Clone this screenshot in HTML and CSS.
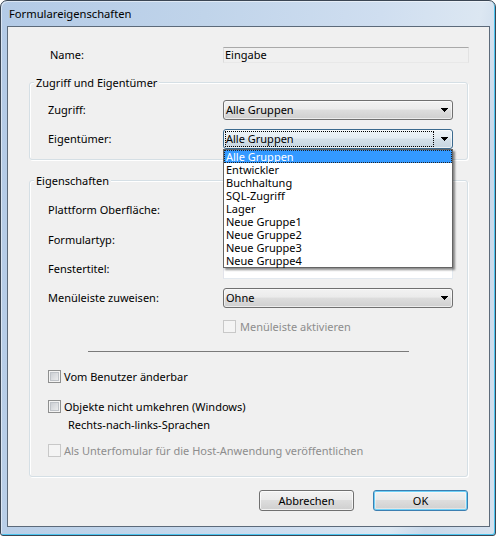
FILE: index.html
```html
<!DOCTYPE html>
<html lang="de">
<head>
<meta charset="utf-8">
<title>Formulareigenschaften</title>
<link rel="stylesheet" href="styles.css">
</head>
<body>
<div class="window">
  <div class="titlebar"><span class="title">Formulareigenschaften</span></div>
  <div class="client">
    <div class="row name-row">
      <span class="label">Name:</span>
      <div class="field readonly">Eingabe</div>
    </div>

    <div class="group group-access">
      <span class="legend">Zugriff und Eigentümer</span>
      <div class="row">
        <span class="label">Zugriff:</span>
        <div class="combo"><span class="value">Alle Gruppen</span><svg class="arrow" viewBox="0 0 7 4"><path d="M0 0h7v1h-1v1h-1v1h-1v1h-1v-1h-1v-1h-1v-1h-1z"/></svg></div>
      </div>
      <div class="row row-owner">
        <span class="label">Eigentümer:</span>
        <div class="combo combo-open">
          <span class="value focus-rect">Alle Gruppen</span><svg class="arrow" viewBox="0 0 7 4"><path d="M0 0h7v1h-1v1h-1v1h-1v1h-1v-1h-1v-1h-1v-1h-1z"/></svg>
          <ul class="dropdown">
            <li class="selected">Alle Gruppen</li>
            <li>Entwickler</li>
            <li>Buchhaltung</li>
            <li>SQL-Zugriff</li>
            <li>Lager</li>
            <li>Neue Gruppe1</li>
            <li>Neue Gruppe2</li>
            <li>Neue Gruppe3</li>
            <li>Neue Gruppe4</li>
          </ul>
        </div>
      </div>
    </div>

    <div class="group group-props">
      <span class="legend">Eigenschaften</span>
      <div class="row">
        <span class="label">Plattform Oberfläche:</span>
        <div class="combo"><span class="value"></span><svg class="arrow" viewBox="0 0 7 4"><path d="M0 0h7v1h-1v1h-1v1h-1v1h-1v-1h-1v-1h-1v-1h-1z"/></svg></div>
      </div>
      <div class="row row-g10">
        <span class="label">Formulartyp:</span>
        <div class="combo"><span class="value"></span><svg class="arrow" viewBox="0 0 7 4"><path d="M0 0h7v1h-1v1h-1v1h-1v1h-1v-1h-1v-1h-1v-1h-1z"/></svg></div>
      </div>
      <div class="row row-g9">
        <span class="label">Fenstertitel:</span>
        <div class="field"></div>
      </div>
      <div class="row row-g9">
        <span class="label">Menüleiste zuweisen:</span>
        <div class="combo"><span class="value">Ohne</span><svg class="arrow" viewBox="0 0 7 4"><path d="M0 0h7v1h-1v1h-1v1h-1v1h-1v-1h-1v-1h-1v-1h-1z"/></svg></div>
      </div>
      <div class="check disabled check-menu"><span class="box"></span><span>Menüleiste aktivieren</span></div>
      <div class="separator"></div>
      <div class="check check-user"><span class="box"></span><span>Vom Benutzer änderbar</span></div>
      <div class="check check-mirror"><span class="box"></span><span>Objekte nicht umkehren (Windows)</span></div>
      <div class="note">Rechts-nach-links-Sprachen</div>
      <div class="check disabled check-sub"><span class="box"></span><span>Als Unterfomular für die Host-Anwendung veröffentlichen</span></div>
    </div>

    <div class="buttons">
      <button class="btn">Abbrechen</button>
      <button class="btn btn-default">OK</button>
    </div>
  </div>
</div>
</body>
</html>
```

FILE: styles.css
```css
* { box-sizing: border-box; }
html, body { margin: 0; padding: 0; }
body {
  font-family: "Noto Sans", "Open Sans", sans-serif;
  font-size: 11px;
  line-height: 14px;
  color: #000;
  background: #fff;
}

.window {
  width: 496px;
  height: 536px;
  display: flex;
  flex-direction: column;
  border: 1px solid #3b4654;
  border-radius: 7px 7px 3px 3px;
  padding: 0 5px 8px 6px;
  background: linear-gradient(100deg, #b3cae6 0%, #c0d4ea 35%, #cfdef0 65%, #dce7f2 82%, #c8d8ea 88%, #d6e2ef 100%);
  box-shadow: inset -1px -1px 0 #4cc5f0, inset 1px 1px 0 rgba(255,255,255,.5);
}

.titlebar {
  height: 25px;
  display: flex;
  align-items: center;
  padding-left: 2px;
  flex: none;
  font-size: 11.2px;
}

.client {
  flex: 1;
  border: 1px solid #5c6a7a;
  background: #f0f0f0;
  padding: 20px 21px 15px 21px;
  display: flex;
  flex-direction: column;
}

.row {
  display: flex;
  align-items: center;
  height: 20px;
  flex: none;
}
.label { flex: none; white-space: nowrap; }

.name-row { height: 16px; }
.name-row .label { width: 194px; padding-left: 21px; }

.field {
  flex: none;
  width: 230px;
  height: 20px;
  background: #fff;
  border: 1px solid;
  border-color: #abadb3 #e3e9ef #e3e9ef #e2e3ea;
  padding: 0 2px;
  line-height: 18px;
}
.field.readonly {
  width: 246px;
  height: 16px;
  background: #f0f0f0;
  line-height: 14px;
  padding-left: 1px;
  border-color: #a9a9a9 #e2e2e2 #e8e8e8 #dcdcdc;
}

.group {
  position: relative;
  flex: none;
  border: 1px solid #d5dfe5;
  border-radius: 3px;
  box-shadow: inset 1px 1px 0 #fff, 1px 1px 0 #fff;
}
.group .label { width: 175px; }
.group-access { margin-top: 19px; padding: 17px 14px 10px 18px; }
.group-props { margin-top: 20px; padding: 19px 14px 19px 18px; }
.legend {
  position: absolute;
  top: -8px;
  left: 4px;
  padding: 0 2px;
  background: #f0f0f0;
  line-height: 16px;
}

.row-owner { margin-top: 9px; }
.row-g10 { margin-top: 10px; }
.row-g9 { margin-top: 9px; }

.combo {
  position: relative;
  flex: none;
  width: 230px;
  height: 20px;
  border: 1px solid #707070;
  border-radius: 3px;
  background: linear-gradient(#f2f2f2, #ebebeb 45%, #dddddd 50%, #cfcfcf);
  box-shadow: inset 0 0 0 1px rgba(255,255,255,.6);
  display: flex;
  align-items: center;
  padding-left: 2px;
}
.combo .value { flex: 1; white-space: nowrap; }
.arrow {
  flex: none;
  width: 7px;
  height: 4px;
  margin-left: auto;
  margin-right: 4px;
  fill: #000;
}

.combo-open {
  border-color: #3c6a8e;
  background: linear-gradient(#eef4f8, #e4ecf2 45%, #d4e0e9 50%, #c6d5e0);
}
.combo-open .focus-rect {
  flex: none;
  width: 209px;
  height: 16px;
  margin-left: -1px;
  border: 1px dotted #000;
  line-height: 14px;
}

.dropdown {
  position: absolute;
  z-index: 10;
  left: -1px;
  top: calc(100% + 1px);
  width: 230px;
  margin: 0;
  padding: 0;
  list-style: none;
  background: #fff;
  border: 1px solid #646464;
  box-shadow: 2px 2px 2px rgba(0,0,0,.45);
}
.dropdown li {
  height: 13px;
  line-height: 13px;
  padding-left: 2px;
  white-space: nowrap;
}
.dropdown li.selected {
  background: #3399ff;
  color: #fff;
  outline: 1px dotted #222;
  outline-offset: -1px;
}

.check {
  display: flex;
  align-items: center;
  gap: 3px;
  height: 13px;
  line-height: 13px;
  flex: none;
  white-space: nowrap;
}
.check.disabled { color: #8d8d8d; }
.box {
  flex: none;
  width: 13px;
  height: 13px;
  border: 1px solid #8e8f8f;
  background: linear-gradient(135deg, #c2c6cc, #f4f4f4);
  box-shadow: inset 0 0 0 1px #f4f4f4, inset 0 0 0 2px #bfc3c8;
}
.check.disabled .box {
  border-color: #c8c8c8;
  background: #f4f4f4;
  box-shadow: none;
}
.check-menu { margin-top: 12px; margin-left: 175px; gap: 4px; }
.separator {
  flex: none;
  margin: 18px 0 0 40px;
  width: 321px;
  height: 1px;
  background: #7a7a7a;
}
.check-user { margin-top: 18px; }
.check-mirror { margin-top: 17px; }
.note { margin-top: 5px; margin-left: 20px; height: 13px; line-height: 13px; }
.check-sub { margin-top: 13px; }

.buttons {
  margin-top: 13px;
  display: flex;
  justify-content: flex-end;
  gap: 19px;
}
.btn {
  width: 95px;
  height: 21px;
  font: inherit;
  color: #000;
  padding: 0;
  border: 1px solid #707070;
  border-radius: 3px;
  background: linear-gradient(#f2f2f2, #ebebeb 45%, #dddddd 50%, #cfcfcf);
  box-shadow: inset 0 0 0 1px rgba(255,255,255,.7);
  line-height: 19px;
}
.btn-default {
  border-color: #3c7fb1;
  box-shadow: inset 0 0 0 1px #6ed0f7, inset 0 0 0 2px rgba(255,255,255,.4);
}
```
